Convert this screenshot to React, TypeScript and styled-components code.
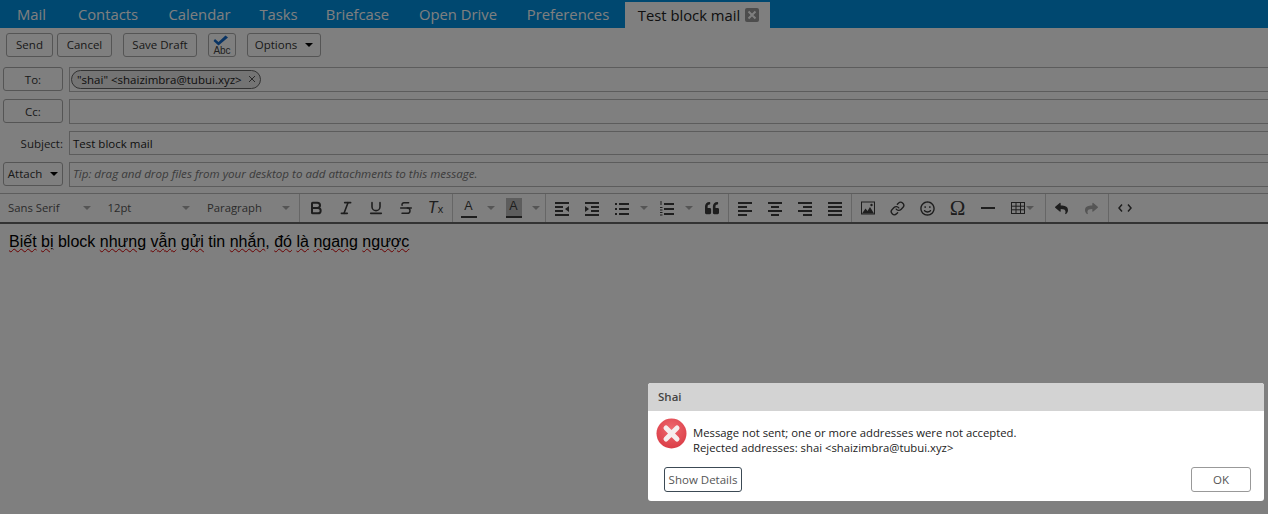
import styled, { createGlobalStyle } from 'styled-components';
import { FaQuoteLeft, FaRegSmile, FaReply } from 'react-icons/fa';
import { Bold, Italic, Link as LinkIcon, Strikethrough, Underline } from 'lucide-react';

const UI_FONT = `'Open Sans', 'Noto Sans', sans-serif`;
const ICON_COLOR = '#3c3c3c';

const GlobalStyle = createGlobalStyle`
    html, body {
        margin: 0;
        padding: 0;
        height: 100%;
        overflow: hidden;
        background: #ffffff;
    }
    #root {
        height: 100%;
    }
`;

const Page = styled.div`
    position: relative;
    width: 1268px;
    height: 514px;
    overflow: hidden;
    display: flex;
    flex-direction: column;
    font-family: ${UI_FONT};
    background: #fff;
`;

const TabBar = styled.div`
    height: 28px;
    flex: none;
    display: flex;
    align-items: flex-end;
    background: #0090e0;
    padding-left: 0.5px;
`;

const Tab = styled.div<{ $w: number }>`
    width: ${({ $w }) => $w}px;
    height: 28px;
    display: flex;
    align-items: center;
    justify-content: center;
    font-size: 14.8px;
    color: #fff;
    white-space: nowrap;
`;

const ActiveTab = styled.div`
    margin-left: 1.5px;
    width: 145px;
    height: 26px;
    display: flex;
    align-items: center;
    justify-content: center;
    gap: 5px;
    padding-left: 2px;
    font-size: 14.8px;
    color: #222;
    background: #fff;
    box-sizing: border-box;
    white-space: nowrap;
`;

const CloseBox = styled.span`
    width: 14px;
    height: 14px;
    border-radius: 2px;
    background: #9a9a9a;
    display: flex;
    align-items: center;
    justify-content: center;
`;

const ActionBar = styled.div`
    height: 34px;
    flex: none;
    display: flex;
    align-items: center;
    padding: 0 6px;
    box-sizing: border-box;
`;

const Button = styled.button<{ $w: number; $ml?: number }>`
    width: ${({ $w }) => $w}px;
    height: 24px;
    margin-left: ${({ $ml }) => $ml ?? 0}px;
    flex: none;
    display: flex;
    align-items: center;
    justify-content: center;
    gap: 8px;
    padding: 0 0 1px;
    box-sizing: border-box;
    font-family: ${UI_FONT};
    font-size: 11.5px;
    color: #333;
    background: #fff;
    border: 1px solid #aaa;
    border-radius: 3px;
`;

const AddressButton = styled(Button)`
    padding: 1px 0 0;
`;

const Caret = styled.span<{ $muted?: boolean }>`
    width: 0;
    height: 0;
    border-left: 4px solid transparent;
    border-right: 4px solid transparent;
    border-top: 4px solid ${({ $muted }) => ($muted ? '#aaa' : '#000')};
`;

const Fields = styled.div`
    display: flex;
    flex-direction: column;
    padding: 5px 0 0 3px;
    gap: 7px;
    flex: none;
`;

const FieldRow = styled.div<{ $h: number }>`
    height: ${({ $h }) => $h}px;
    display: flex;
    gap: 6px;
`;

const FieldLabel = styled.label`
    width: 60px;
    height: 100%;
    flex: none;
    display: flex;
    align-items: center;
    justify-content: flex-end;
    font-size: 11.5px;
    color: #333;
`;

const FieldBox = styled.div`
    flex: 1;
    display: flex;
    align-items: center;
    box-sizing: border-box;
    border: 1px solid #b8b8b8;
    border-right: none;
    padding-left: 3px;
    font-size: 11.5px;
    color: #222;
`;

const Tip = styled.span`
    font-style: italic;
    color: #777;
    font-size: 11.6px;
    margin-top: -2px;
`;

const AddressChip = styled.span`
    height: 19px;
    display: flex;
    align-items: center;
    gap: 6px;
    padding: 0 4px 1px 5px;
    margin-left: -2px;
    box-sizing: border-box;
    border: 1px solid #666;
    border-radius: 10px;
    background: #e8e8e8;
    font-size: 11.5px;
    color: #222;
`;

const EditorToolbar = styled.div`
    margin-top: 6px;
    height: 31px;
    flex: none;
    display: flex;
    align-items: stretch;
    box-sizing: border-box;
    border-top: 1px solid #bbb;
    border-bottom: 2px solid #666;
`;

const ToolGroup = styled.div<{ $flush?: boolean; $last?: boolean }>`
    display: flex;
    align-items: center;
    padding: 0 ${({ $flush }) => ($flush ? 0 : 1)}px;
    border-right: ${({ $last }) => ($last ? 'none' : '1px solid #ccc')};
`;

const SelectBox = styled.div`
    width: 99.5px;
    height: 100%;
    flex: none;
    display: flex;
    align-items: center;
    justify-content: space-between;
    box-sizing: border-box;
    padding: 0 9px 1px 8px;
    font-size: 11.3px;
    color: #555;
`;

const ToolButton = styled.span<{ $muted?: boolean }>`
    width: 30px;
    height: 100%;
    flex: none;
    display: flex;
    align-items: center;
    justify-content: center;
    color: ${({ $muted }) => ($muted ? '#aaa' : ICON_COLOR)};
`;

const TableButton = styled(ToolButton)`
    width: 41px;
    justify-content: flex-start;
    padding-left: 8px;
    box-sizing: border-box;
    gap: 1px;
`;

const SplitArrow = styled.span`
    width: 15px;
    height: 100%;
    flex: none;
    display: flex;
    align-items: center;
    justify-content: center;
    &::before {
        content: '';
        border-left: 4px solid transparent;
        border-right: 4px solid transparent;
        border-top: 4px solid #aaa;
    }
`;

const ColorIcon = styled.span<{ $active?: boolean }>`
    width: 16px;
    height: 20px;
    display: flex;
    flex-direction: column;
    align-items: center;
    justify-content: flex-start;
    box-sizing: border-box;
    border-bottom: 2px solid ${ICON_COLOR};
    background: ${({ $active }) => ($active ? '#bbb' : 'transparent')};
    font-family: 'Liberation Sans', sans-serif;
    font-size: 12.5px;
    line-height: 17px;
    color: ${ICON_COLOR};
`;

const ClearGlyph = styled.span`
    font-family: 'Liberation Sans', sans-serif;
    font-style: italic;
    font-size: 16px;
    line-height: 1;
    color: ${ICON_COLOR};
    & > small {
        font-style: normal;
        font-size: 11px;
    }
`;

const OmegaGlyph = styled.span`
    font-family: 'Liberation Serif', serif;
    font-size: 21px;
    line-height: 1;
    color: ${ICON_COLOR};
`;

const Editor = styled.div`
    flex: 1;
    padding: 8px 9px;
    font-family: 'Liberation Sans', Arial, sans-serif;
    font-size: 16px;
    line-height: 20px;
    color: #000;
`;

const Misspelled = styled.span`
    text-decoration: underline wavy #d80000 1px;
    text-underline-offset: 1px;
`;

const Overlay = styled.div`
    position: absolute;
    inset: 0;
    background: rgba(0, 0, 0, 0.5);
`;

const Dialog = styled.div`
    position: absolute;
    left: 648px;
    top: 383px;
    width: 616px;
    height: 118px;
    display: flex;
    flex-direction: column;
    overflow: hidden;
    border-radius: 3px;
    background: #fff;
    font-family: ${UI_FONT};
`;

const DialogHeader = styled.div`
    height: 28px;
    flex: none;
    display: flex;
    align-items: center;
    padding: 0 0 2px 10px;
    box-sizing: border-box;
    background: #d3d3d3;
    font-size: 11.5px;
    font-weight: 600;
    color: #444;
`;

const DialogBody = styled.div`
    display: flex;
    gap: 6px;
    padding: 7px 0 0 8px;
    height: 46px;
    box-sizing: border-box;
    flex: none;
`;

const Message = styled.div`
    padding-top: 7px;
    font-size: 11.3px;
    line-height: 15px;
    color: #222;
`;

const DialogFooter = styled.div`
    display: flex;
    justify-content: space-between;
    padding: 10px 13px 0 16px;
`;

const DialogButton = styled.button<{ $focused?: boolean; $w: number }>`
    width: ${({ $w }) => $w}px;
    height: 25px;
    padding: 0;
    box-sizing: border-box;
    font-family: ${UI_FONT};
    font-size: 11.5px;
    color: #555;
    background: #fff;
    border: 1px solid ${({ $focused }) => ($focused ? '#3c4a55' : '#999')};
    border-radius: 3px;
`;

type LineRow = [number, number, number];

// Tiny toolbar line icons: each row is x, y, width
const LineIcon = ({ rows }: { rows: LineRow[] }) => (
    <svg width='16' height='16' viewBox='0 0 16 16' fill='currentColor'>
        {rows.map(([x, y, w]) => (
            <rect key={`${x}-${y}`} x={x} y={y} width={w} height='2' />
        ))}
    </svg>
);

const TABS: [string, number][] = [
    ['Mail', 62],
    ['Contacts', 91],
    ['Calendar', 92],
    ['Tasks', 66],
    ['Briefcase', 92],
    ['Open Drive', 109],
    ['Preferences', 111],
];

const ALIGN_LEFT: LineRow[] = [[1, 2, 14], [1, 6, 9], [1, 10, 14], [1, 14, 9]];
const ALIGN_CENTER: LineRow[] = [[1, 2, 14], [4, 6, 8], [1, 10, 14], [4, 14, 8]];
const ALIGN_RIGHT: LineRow[] = [[1, 2, 14], [6, 6, 9], [1, 10, 14], [6, 14, 9]];
const ALIGN_JUSTIFY: LineRow[] = [[1, 2, 14], [1, 6, 14], [1, 10, 14], [1, 14, 14]];

export default function App() {
    return (
        <Page>
            <GlobalStyle />
            <TabBar>
                {TABS.map(([label, w]) => (
                    <Tab key={label} $w={w}>
                        {label}
                    </Tab>
                ))}
                <ActiveTab>
                    Test block mail
                    <CloseBox>
                        <svg width='10' height='10' viewBox='0 0 10 10'>
                            <path d='M1.5 1.5l7 7M8.5 1.5l-7 7' stroke='#fff' strokeWidth='2' />
                        </svg>
                    </CloseBox>
                </ActiveTab>
            </TabBar>

            <ActionBar>
                <Button $w={47}>Send</Button>
                <Button $w={55} $ml={4}>
                    Cancel
                </Button>
                <Button $w={74} $ml={11}>
                    Save Draft
                </Button>
                <Button $w={28} $ml={11}>
                    <svg width='22' height='22' viewBox='0 0 22 22'>
                        <path d='M4 5l3.5 3L14.5 1.5l2.5 2-9.5 8L2.5 7z' fill='#1268c8' />
                        <text x='11' y='20' textAnchor='middle' fontSize='10' fill='#444' fontFamily='Liberation Sans'>
                            Abc
                        </text>
                    </svg>
                </Button>
                <Button $w={74} $ml={11}>
                    Options
                    <Caret />
                </Button>
            </ActionBar>

            <Fields>
                <FieldRow $h={25}>
                    <AddressButton $w={60}>To:</AddressButton>
                    <FieldBox>
                        <AddressChip>
                            "shai" &lt;shaizimbra@tubui.xyz&gt;
                            <svg width='8' height='8' viewBox='0 0 8 8'>
                                <path d='M1 1l6 6M7 1l-6 6' stroke='#555' strokeWidth='1' />
                            </svg>
                        </AddressChip>
                    </FieldBox>
                </FieldRow>
                <FieldRow $h={25}>
                    <AddressButton $w={60}>Cc:</AddressButton>
                    <FieldBox />
                </FieldRow>
                <FieldRow $h={24}>
                    <FieldLabel>Subject:</FieldLabel>
                    <FieldBox>Test block mail</FieldBox>
                </FieldRow>
                <FieldRow $h={25}>
                    <Button $w={60}>
                        Attach
                        <Caret />
                    </Button>
                    <FieldBox>
                        <Tip>Tip: drag and drop files from your desktop to add attachments to this message.</Tip>
                    </FieldBox>
                </FieldRow>
            </Fields>

            <EditorToolbar>
                <ToolGroup $flush>
                    {['Sans Serif', '12pt', 'Paragraph'].map((label) => (
                        <SelectBox key={label}>
                            {label}
                            <Caret $muted />
                        </SelectBox>
                    ))}
                </ToolGroup>
                <ToolGroup>
                    <ToolButton><Bold size={16} strokeWidth={3} /></ToolButton>
                    <ToolButton><Italic size={16} strokeWidth={2.4} /></ToolButton>
                    <ToolButton><Underline size={16} strokeWidth={2.4} /></ToolButton>
                    <ToolButton><Strikethrough size={16} strokeWidth={2.2} /></ToolButton>
                    <ToolButton><ClearGlyph>T<small>x</small></ClearGlyph></ToolButton>
                </ToolGroup>
                <ToolGroup>
                    <ToolButton><ColorIcon>A</ColorIcon></ToolButton>
                    <SplitArrow />
                    <ToolButton><ColorIcon $active>A</ColorIcon></ToolButton>
                    <SplitArrow />
                </ToolGroup>
                <ToolGroup>
                    <ToolButton>
                        <svg width='16' height='16' viewBox='0 0 16 16' fill='currentColor'>
                            <rect x='1' y='2' width='14' height='2' />
                            <rect x='1' y='6' width='8' height='2' />
                            <rect x='1' y='10' width='8' height='2' />
                            <rect x='1' y='14' width='14' height='2' />
                            <path d='M15 6v6l-4-3z' />
                        </svg>
                    </ToolButton>
                    <ToolButton>
                        <svg width='16' height='16' viewBox='0 0 16 16' fill='currentColor'>
                            <rect x='1' y='2' width='14' height='2' />
                            <rect x='7' y='6' width='8' height='2' />
                            <rect x='7' y='10' width='8' height='2' />
                            <rect x='1' y='14' width='14' height='2' />
                            <path d='M1 6v6l4-3z' />
                        </svg>
                    </ToolButton>
                    <ToolButton>
                        <svg width='16' height='16' viewBox='0 0 16 16' fill='currentColor'>
                            <rect x='1' y='3' width='2' height='2' />
                            <rect x='5' y='3' width='10' height='2' />
                            <rect x='1' y='8' width='2' height='2' />
                            <rect x='5' y='8' width='10' height='2' />
                            <rect x='1' y='13' width='2' height='2' />
                            <rect x='5' y='13' width='10' height='2' />
                        </svg>
                    </ToolButton>
                    <SplitArrow />
                    <ToolButton>
                        <svg width='16' height='16' viewBox='0 0 16 16' fill='currentColor'>
                            <rect x='1.5' y='1' width='1' height='4' />
                            <rect x='1' y='7' width='2.5' height='1' />
                            <rect x='1' y='9.5' width='2.5' height='1' />
                            <rect x='1' y='12' width='2.5' height='1' />
                            <rect x='1' y='14.5' width='2.5' height='1' />
                            <rect x='5' y='3' width='10' height='2' />
                            <rect x='5' y='8' width='10' height='2' />
                            <rect x='5' y='13' width='10' height='2' />
                        </svg>
                    </ToolButton>
                    <SplitArrow />
                    <ToolButton><FaQuoteLeft size={14} /></ToolButton>
                </ToolGroup>
                <ToolGroup>
                    <ToolButton><LineIcon rows={ALIGN_LEFT} /></ToolButton>
                    <ToolButton><LineIcon rows={ALIGN_CENTER} /></ToolButton>
                    <ToolButton><LineIcon rows={ALIGN_RIGHT} /></ToolButton>
                    <ToolButton><LineIcon rows={ALIGN_JUSTIFY} /></ToolButton>
                </ToolGroup>
                <ToolGroup>
                    <ToolButton>
                        <svg width='16' height='16' viewBox='0 0 16 16'>
                            <rect x='1.5' y='2' width='13' height='12' fill='none' stroke='currentColor' />
                            <path d='M2 13.5l3.5-5 2 2.5 2.5-4 4 6.5z' fill='currentColor' />
                            <circle cx='11.5' cy='5' r='1.2' fill='currentColor' />
                        </svg>
                    </ToolButton>
                    <ToolButton><LinkIcon size={15} strokeWidth={2.2} /></ToolButton>
                    <ToolButton><FaRegSmile size={15} /></ToolButton>
                    <ToolButton><OmegaGlyph>Ω</OmegaGlyph></ToolButton>
                    <ToolButton>
                        <svg width='16' height='16' viewBox='0 0 16 16' fill='currentColor'>
                            <rect x='1' y='7' width='14' height='2' />
                        </svg>
                    </ToolButton>
                    <TableButton>
                        <svg width='14' height='12' viewBox='0 0 14 12' fill='none' stroke='currentColor'>
                            <rect x='.5' y='.5' width='13' height='11' />
                            <path d='M.5 4.2h13M.5 7.8h13M5 .5v11M9.5 .5v11' />
                        </svg>
                        <Caret $muted />
                    </TableButton>
                </ToolGroup>
                <ToolGroup>
                    <ToolButton><FaReply size={13} /></ToolButton>
                    <ToolButton $muted><FaReply size={13} style={{ transform: 'scaleX(-1)' }} /></ToolButton>
                </ToolGroup>
                <ToolGroup $last>
                    <ToolButton>
                        <svg width='14' height='10' viewBox='0 0 14 10' fill='none' stroke='currentColor' strokeWidth='1.5'>
                            <path d='M4 1.5L1 5l3 3.5M10 1.5L13 5l-3 3.5' />
                        </svg>
                    </ToolButton>
                </ToolGroup>
            </EditorToolbar>

            <Editor>
                <Misspelled>Biết</Misspelled> <Misspelled>bị</Misspelled> block <Misspelled>nhưng</Misspelled>{' '}
                <Misspelled>vẫn</Misspelled> <Misspelled>gửi</Misspelled> tin <Misspelled>nhắn</Misspelled>,{' '}
                <Misspelled>đó</Misspelled> <Misspelled>là</Misspelled> <Misspelled>ngang</Misspelled>{' '}
                <Misspelled>ngược</Misspelled>
            </Editor>

            <Overlay />

            <Dialog>
                <DialogHeader>Shai</DialogHeader>
                <DialogBody>
                    <svg width='31' height='31' viewBox='0 0 31 31' style={{ flex: 'none' }}>
                        <defs>
                            <radialGradient id='errFill' cx='50%' cy='35%' r='70%'>
                                <stop offset='0%' stopColor='#ef6a70' />
                                <stop offset='100%' stopColor='#d93a44' />
                            </radialGradient>
                        </defs>
                        <circle cx='15.5' cy='15.5' r='15' fill='url(#errFill)' />
                        <path d='M10 10l11 11M21 10L10 21' stroke='#f6eeee' strokeWidth='5' strokeLinecap='round' />
                    </svg>
                    <Message>
                        Message not sent; one or more addresses were not accepted.
                        <br />
                        Rejected addresses: shai &lt;shaizimbra@tubui.xyz&gt;
                    </Message>
                </DialogBody>
                <DialogFooter>
                    <DialogButton $w={78} $focused>
                        Show Details
                    </DialogButton>
                    <DialogButton $w={60}>OK</DialogButton>
                </DialogFooter>
            </Dialog>
        </Page>
    );
}
